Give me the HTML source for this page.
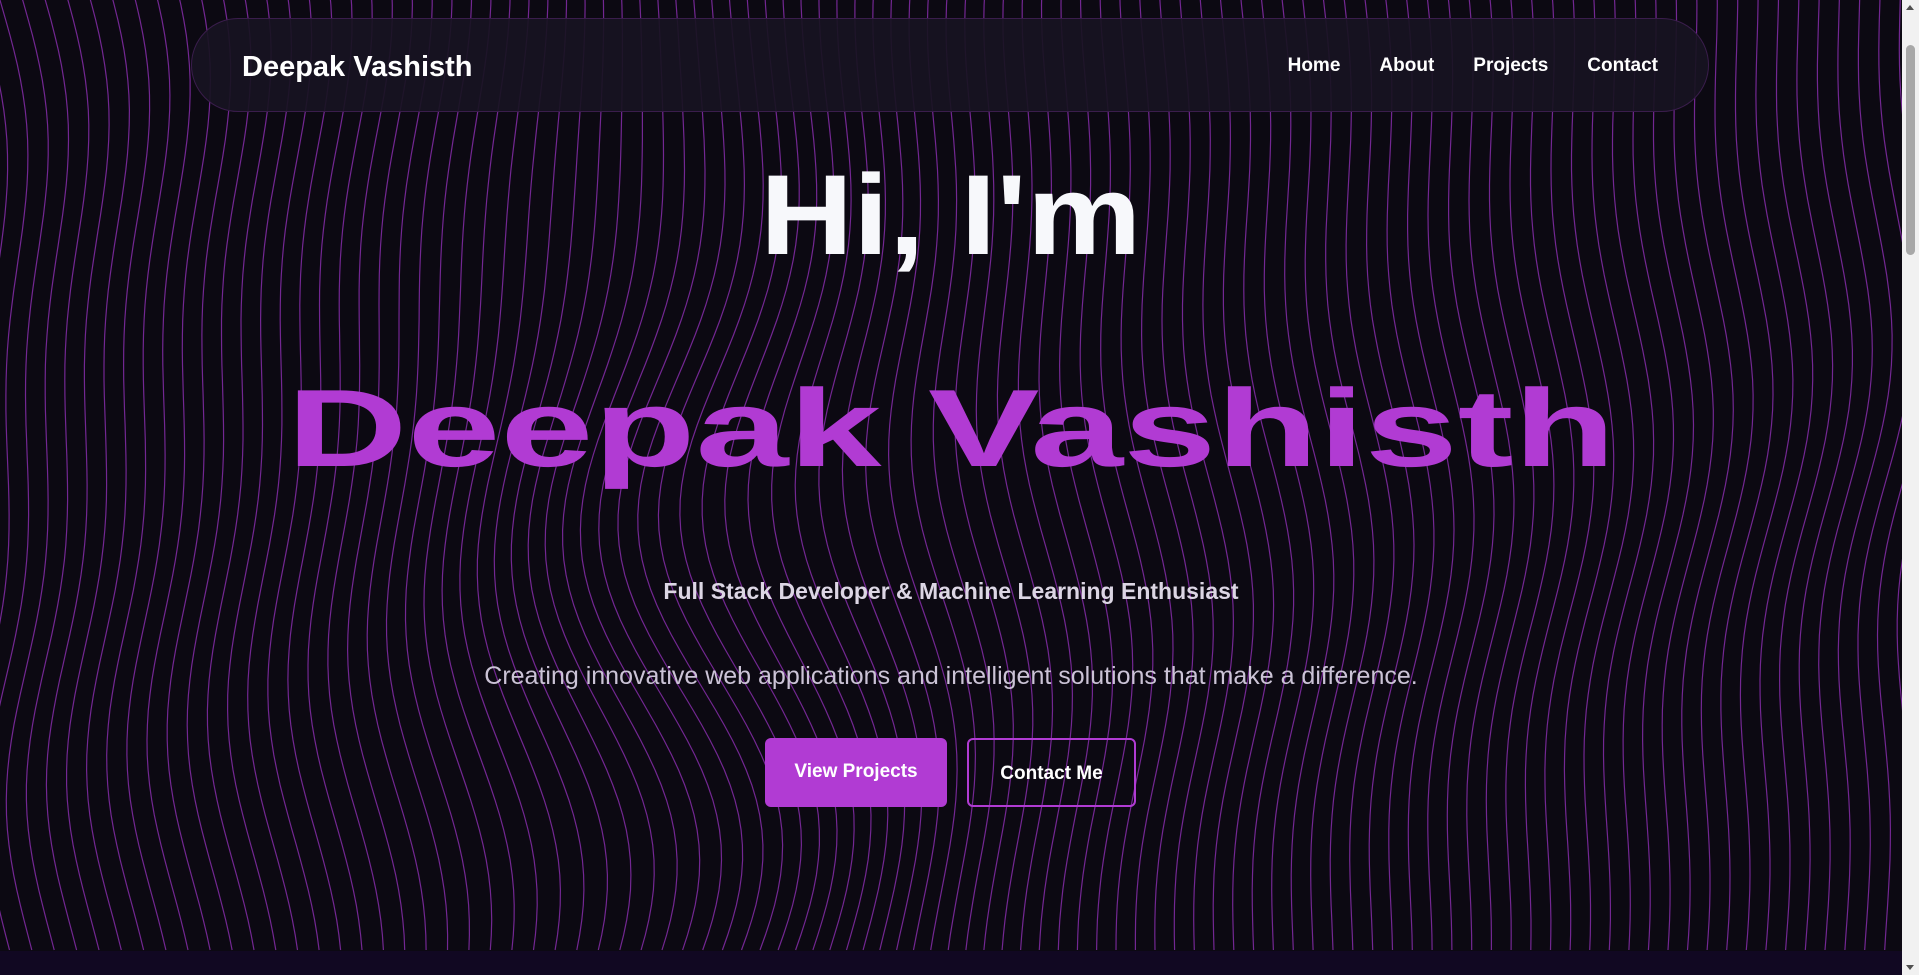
<!DOCTYPE html>
<html><head><meta charset="utf-8"><style>
html,body{margin:0;padding:0;width:1919px;height:975px;overflow:hidden;background:#0c0912;font-family:"Liberation Sans",sans-serif}
#bg{position:absolute;left:0;top:0}
.strip{position:absolute;left:0;top:951px;width:1902px;height:24px;background:#110822}
.scroll{position:absolute;right:0;top:0;width:17px;height:975px;background:#f1f1f1}
.scroll .th{position:absolute;left:4px;top:45px;width:9px;height:210px;background:#a8a8a8;border-radius:5px}
.scroll .up,.scroll .dn{position:absolute;left:4px;width:0;height:0;border-left:4.5px solid transparent;border-right:4.5px solid transparent}
.scroll .up{top:5px;border-bottom:5px solid #505050}
.scroll .dn{bottom:5px;border-top:5px solid #505050}
nav{position:absolute;left:191px;top:18px;width:1518px;height:94px;border-radius:47px;background:rgba(24,20,34,.92);border:1px solid #3a1d4c;box-sizing:border-box}
.brand{position:absolute;left:50px;top:32px;font-size:29px;font-weight:bold;color:#fff}
.links{position:absolute;right:50px;top:36px;font-size:19px;color:#fff;font-weight:bold}
.links span{margin-left:39px}
.t{position:absolute;left:0;width:1902px;text-align:center}
.hi{top:150px;font-size:114px;color:#f7f8fb;font-weight:bold}
.hi span,.nm span{display:inline-block;transform:scaleX(1.13);transform-origin:center}
.nm{top:365px;font-size:110px;color:#b13bd3;font-weight:bold}
.nm span{transform:scaleX(1.52)}
.sub{top:578px;font-size:23px;color:#dcd6e4;font-weight:bold}
.p{top:662px;font-size:25px;color:#cbc3d6}
.btn{position:absolute;top:738px;height:69px;box-sizing:border-box;border-radius:6px;color:#fff;font-weight:bold;font-size:19px;text-align:center;line-height:67px}
.b1{left:765px;width:182px;background:#b13bd3}
.b2{left:967px;width:169px;border:2px solid #b13bd3;line-height:67px}
</style></head><body>
<svg id="bg" width="1902" height="951"></svg>
<div class="strip"></div>
<nav><div class="brand">Deepak Vashisth</div><div class="links"><span>Home</span><span>About</span><span>Projects</span><span>Contact</span></div></nav>
<div class="t hi"><span>Hi, I'm</span></div>
<div class="t nm"><span>Deepak Vashisth</span></div>
<div class="t sub">Full Stack Developer &amp; Machine Learning Enthusiast</div>
<div class="t p">Creating innovative web applications and intelligent solutions that make a difference.</div>
<div class="btn b1">View Projects</div>
<div class="btn b2">Contact Me</div>
<div class="scroll"><div class="up"></div><div class="th"></div><div class="dn"></div></div>
<script>
var s=document.getElementById('bg'),h='';
for(var x=-100;x<2000;x+=20){var d='';for(var y=-10;y<=960;y+=15){
var dx=22*Math.sin(y/170+x/300)+12*Math.sin(y/75+x/200)+35*Math.exp(-Math.pow((x-700)/200,2))*Math.sin(y/110);
d+=(y<0?'M':'L')+(x+dx).toFixed(1)+','+y;}
h+='<path d="'+d+'" fill="none" stroke="#9632bd" stroke-opacity="0.75" stroke-width="1.2"/>';}
s.innerHTML=h;
</script>
</body></html>
